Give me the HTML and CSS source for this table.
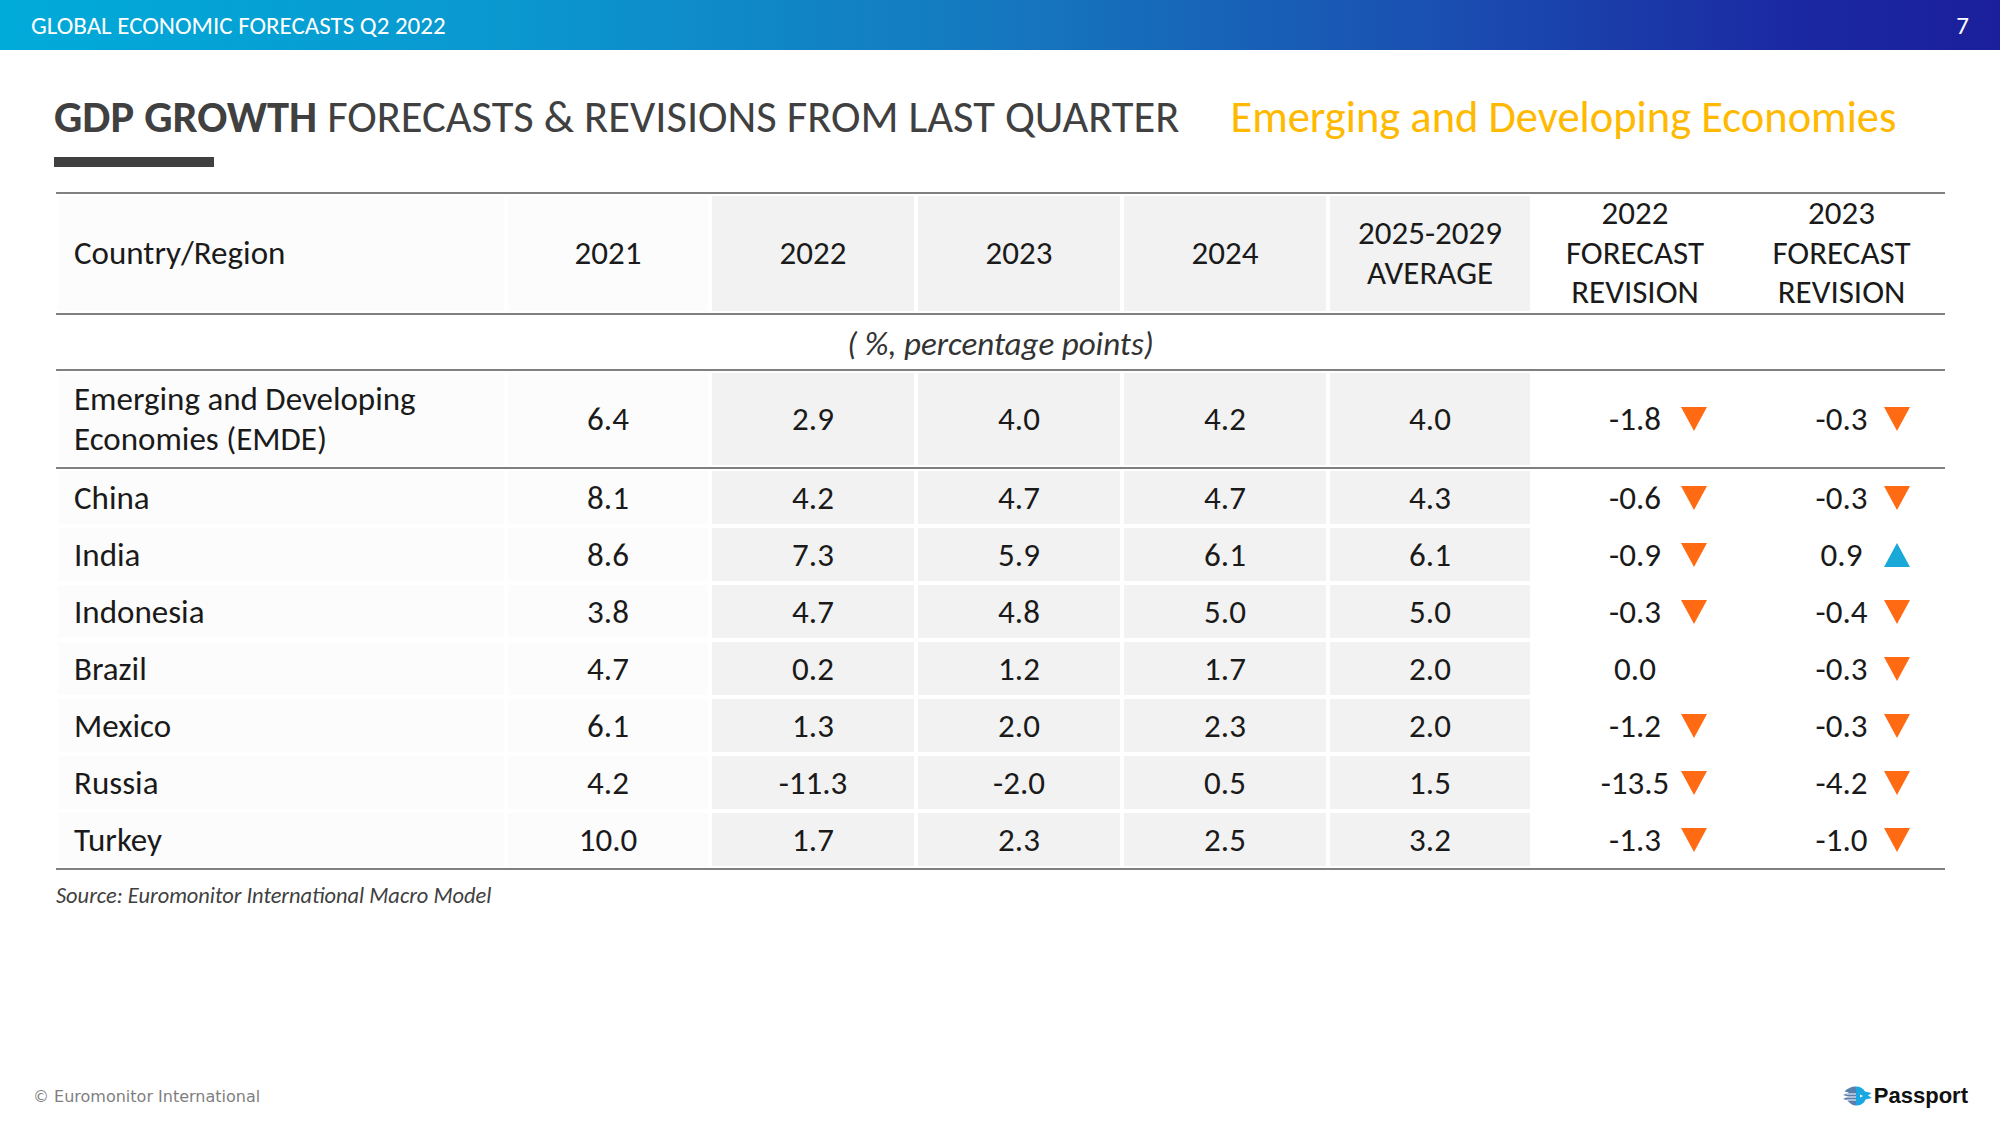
FILE: index.html
```html
<!DOCTYPE html>
<html lang="en">
<head>
<meta charset="utf-8">
<title>GDP Growth Forecasts &amp; Revisions</title>
<link rel="stylesheet" href="styles.css">
</head>
<body>
<div class="slide">
  <header class="topbar">
    <span class="topbar-title">GLOBAL ECONOMIC FORECASTS Q2 2022</span>
    <span class="page-num">7</span>
  </header>

  <main class="content">
    <div class="title-row">
      <h1 class="title"><strong>GDP GROWTH</strong> FORECASTS &amp; REVISIONS FROM LAST QUARTER</h1>
      <div class="subtitle">Emerging and Developing Economies</div>
    </div>
    <div class="title-rule"></div>

    <div class="tbl">
      <div class="row head">
        <div class="cell name w">Country/Region</div>
        <div class="cell w">2021</div>
        <div class="cell g">2022</div>
        <div class="cell g">2023</div>
        <div class="cell g">2024</div>
        <div class="cell g">2025-2029<br>AVERAGE</div>
        <div class="cell r">2022<br>FORECAST<br>REVISION</div>
        <div class="cell r">2023<br>FORECAST<br>REVISION</div>
      </div>

      <div class="units">( %, percentage points)</div>

      <div class="row emde">
        <div class="cell name w">Emerging and Developing<br>Economies (EMDE)</div>
        <div class="cell w">6.4</div>
        <div class="cell g">2.9</div>
        <div class="cell g">4.0</div>
        <div class="cell g">4.2</div>
        <div class="cell g">4.0</div>
        <div class="cell r rev rev22"><span class="num">-1.8</span><svg class="tri" viewBox="0 0 26 24"><polygon points="0,0 26,0 13,24"/></svg></div>
        <div class="cell r rev rev23"><span class="num">-0.3</span><svg class="tri" viewBox="0 0 26 24"><polygon points="0,0 26,0 13,24"/></svg></div>
      </div>

      <div class="row data">
        <div class="cell name w">China</div>
        <div class="cell w">8.1</div>
        <div class="cell g">4.2</div>
        <div class="cell g">4.7</div>
        <div class="cell g">4.7</div>
        <div class="cell g">4.3</div>
        <div class="cell r rev rev22"><span class="num">-0.6</span><svg class="tri" viewBox="0 0 26 24"><polygon points="0,0 26,0 13,24"/></svg></div>
        <div class="cell r rev rev23"><span class="num">-0.3</span><svg class="tri" viewBox="0 0 26 24"><polygon points="0,0 26,0 13,24"/></svg></div>
      </div>

      <div class="row data">
        <div class="cell name w">India</div>
        <div class="cell w">8.6</div>
        <div class="cell g">7.3</div>
        <div class="cell g">5.9</div>
        <div class="cell g">6.1</div>
        <div class="cell g">6.1</div>
        <div class="cell r rev rev22"><span class="num">-0.9</span><svg class="tri" viewBox="0 0 26 24"><polygon points="0,0 26,0 13,24"/></svg></div>
        <div class="cell r rev rev23"><span class="num">0.9</span><svg class="tri up" viewBox="0 0 26 24"><polygon points="13,0 26,24 0,24"/></svg></div>
      </div>

      <div class="row data">
        <div class="cell name w">Indonesia</div>
        <div class="cell w">3.8</div>
        <div class="cell g">4.7</div>
        <div class="cell g">4.8</div>
        <div class="cell g">5.0</div>
        <div class="cell g">5.0</div>
        <div class="cell r rev rev22"><span class="num">-0.3</span><svg class="tri" viewBox="0 0 26 24"><polygon points="0,0 26,0 13,24"/></svg></div>
        <div class="cell r rev rev23"><span class="num">-0.4</span><svg class="tri" viewBox="0 0 26 24"><polygon points="0,0 26,0 13,24"/></svg></div>
      </div>

      <div class="row data">
        <div class="cell name w">Brazil</div>
        <div class="cell w">4.7</div>
        <div class="cell g">0.2</div>
        <div class="cell g">1.2</div>
        <div class="cell g">1.7</div>
        <div class="cell g">2.0</div>
        <div class="cell r rev rev22"><span class="num">0.0</span></div>
        <div class="cell r rev rev23"><span class="num">-0.3</span><svg class="tri" viewBox="0 0 26 24"><polygon points="0,0 26,0 13,24"/></svg></div>
      </div>

      <div class="row data">
        <div class="cell name w">Mexico</div>
        <div class="cell w">6.1</div>
        <div class="cell g">1.3</div>
        <div class="cell g">2.0</div>
        <div class="cell g">2.3</div>
        <div class="cell g">2.0</div>
        <div class="cell r rev rev22"><span class="num">-1.2</span><svg class="tri" viewBox="0 0 26 24"><polygon points="0,0 26,0 13,24"/></svg></div>
        <div class="cell r rev rev23"><span class="num">-0.3</span><svg class="tri" viewBox="0 0 26 24"><polygon points="0,0 26,0 13,24"/></svg></div>
      </div>

      <div class="row data">
        <div class="cell name w">Russia</div>
        <div class="cell w">4.2</div>
        <div class="cell g">-11.3</div>
        <div class="cell g">-2.0</div>
        <div class="cell g">0.5</div>
        <div class="cell g">1.5</div>
        <div class="cell r rev rev22"><span class="num">-13.5</span><svg class="tri" viewBox="0 0 26 24"><polygon points="0,0 26,0 13,24"/></svg></div>
        <div class="cell r rev rev23"><span class="num">-4.2</span><svg class="tri" viewBox="0 0 26 24"><polygon points="0,0 26,0 13,24"/></svg></div>
      </div>

      <div class="row data">
        <div class="cell name w">Turkey</div>
        <div class="cell w">10.0</div>
        <div class="cell g">1.7</div>
        <div class="cell g">2.3</div>
        <div class="cell g">2.5</div>
        <div class="cell g">3.2</div>
        <div class="cell r rev rev22"><span class="num">-1.3</span><svg class="tri" viewBox="0 0 26 24"><polygon points="0,0 26,0 13,24"/></svg></div>
        <div class="cell r rev rev23"><span class="num">-1.0</span><svg class="tri" viewBox="0 0 26 24"><polygon points="0,0 26,0 13,24"/></svg></div>
      </div>
    </div>

    <p class="source">Source: Euromonitor International Macro Model</p>
  </main>

  <footer class="footer">
    <span class="copyright">© Euromonitor International</span>
    <span class="logo">
      <svg class="logo-mark" viewBox="0 0 32 24">
        <path fill="#5a7fae" d="M15 2.5 C10 2.5 6 4.5 3.5 7.5 L8 8.5 L2 11 L7 12.5 L2 15 L6 16 C8.5 19.5 11.5 21.5 15 21.5 Z"/>
        <path fill="#ffffff" d="M5 9.6h10v1H5zM5 12.6h10v1H5zM6 15.6h9v1H6z"/>
        <path fill="#1ba8e2" d="M15 2.5 C19.5 2.5 22.5 4.5 24 7.5 L30.5 9 L27 11.5 L31 14 L24.5 15.5 C23 19.5 19.5 21.5 15 21.5 Z"/>
        <path fill="#ffffff" d="M19 10.5 l3 1.5 l-3 1.5z"/>
      </svg>
      <span class="logo-text">Passport</span>
    </span>
  </footer>
</div>
</body>
</html>
```

FILE: styles.css
```css
* {
  box-sizing: border-box;
}

body {
  margin: 0;
  background: #ffffff;
  font-family: Carlito, Lato, "Liberation Sans", sans-serif;
}

.slide {
  width: 2000px;
  height: 1125px;
  display: flex;
  flex-direction: column;
  overflow: hidden;
  background: #ffffff;
}

/* ---------- top bar ---------- */
.topbar {
  flex: none;
  height: 50px;
  display: flex;
  align-items: center;
  justify-content: space-between;
  padding: 0 31px 0 31px;
  background: linear-gradient(90deg, #00abd9 0%, #0a98cf 25%, #1578bf 50%, #1a4fb1 72%, #1b28a2 90%, #1b1f9c 100%);
  color: #ffffff;
  font-size: 25px;
}

/* ---------- content ---------- */
.content {
  flex: 1;
  padding: 40px 55px 0 54px;
}

.title-row {
  display: flex;
  align-items: baseline;
  gap: 51px;
  height: 54px;
}

.title {
  margin: 0;
  font-size: 44.5px;
  font-weight: 400;
  line-height: 54px;
  color: #404040;
  white-space: nowrap;
}

.title strong {
  font-weight: 700;
}

.subtitle {
  font-size: 44.5px;
  line-height: 54px;
  color: #ffb900;
  white-space: nowrap;
}

.title-rule {
  width: 160px;
  height: 10px;
  margin-top: 13px;
  background: #404040;
}

/* ---------- table ---------- */
.tbl {
  width: 1889px;
  margin: 25px 0 0 2px;
  border-top: 2px solid #808080;
  border-bottom: 2px solid #808080;
  font-size: 33px;
  line-height: 40px;
  color: #1a1a1a;
}

.row {
  display: grid;
  grid-template-columns: 450px 204px 206px 206px 206px 204px 206px 207px;
}

.head {
  height: 121px;
  grid-template-rows: 119px;
  border-bottom: 2px solid #808080;
}

.head .cell {
  min-height: 0;
  line-height: 39.5px;
}

.units {
  height: 56px;
  display: flex;
  align-items: center;
  justify-content: center;
  padding-top: 3px;
  border-bottom: 2px solid #808080;
  font-style: italic;
  color: #333333;
}

.emde {
  height: 98px;
  grid-template-rows: 96px;
  border-bottom: 2px solid #808080;
}

.data {
  height: 57px;
  grid-template-rows: 57px;
}

.cell {
  display: flex;
  align-items: center;
  justify-content: center;
  text-align: center;
  border: 2px solid #ffffff;
}

.name {
  justify-content: flex-start;
  text-align: left;
  padding-left: 16px;
}

.w {
  background: #fcfcfc;
}

.g {
  background: #f2f2f2;
}

.r {
  background: #ffffff;
}

.rev {
  display: grid;
  align-items: center;
}

.rev22 {
  grid-template-columns: 55px 1fr 55px;
}

.rev23 {
  grid-template-columns: 59px 1fr 59px;
}

.rev .num {
  grid-column: 2;
  text-align: center;
  white-space: nowrap;
}

.tri {
  grid-column: 3;
  justify-self: start;
  width: 26px;
  height: 24px;
  fill: #ff6a13;
}

.tri.up {
  fill: #19a9d9;
}

.source {
  margin: 12px 0 0 2px;
  font-size: 22.4px;
  font-style: italic;
  color: #404040;
}

/* ---------- footer ---------- */
.footer {
  flex: none;
  height: 58px;
  display: flex;
  align-items: center;
  justify-content: space-between;
  padding: 0 32px 0 33px;
}

.copyright {
  font-family: "DejaVu Sans", sans-serif;
  font-size: 16px;
  color: #7f7f7f;
}

.logo {
  display: flex;
  align-items: center;
  gap: 1px;
}

.logo-mark {
  width: 32px;
  height: 24px;
}

.logo-text {
  font-family: "Liberation Sans", sans-serif;
  font-weight: 700;
  font-size: 22px;
  color: #111111;
}
```
